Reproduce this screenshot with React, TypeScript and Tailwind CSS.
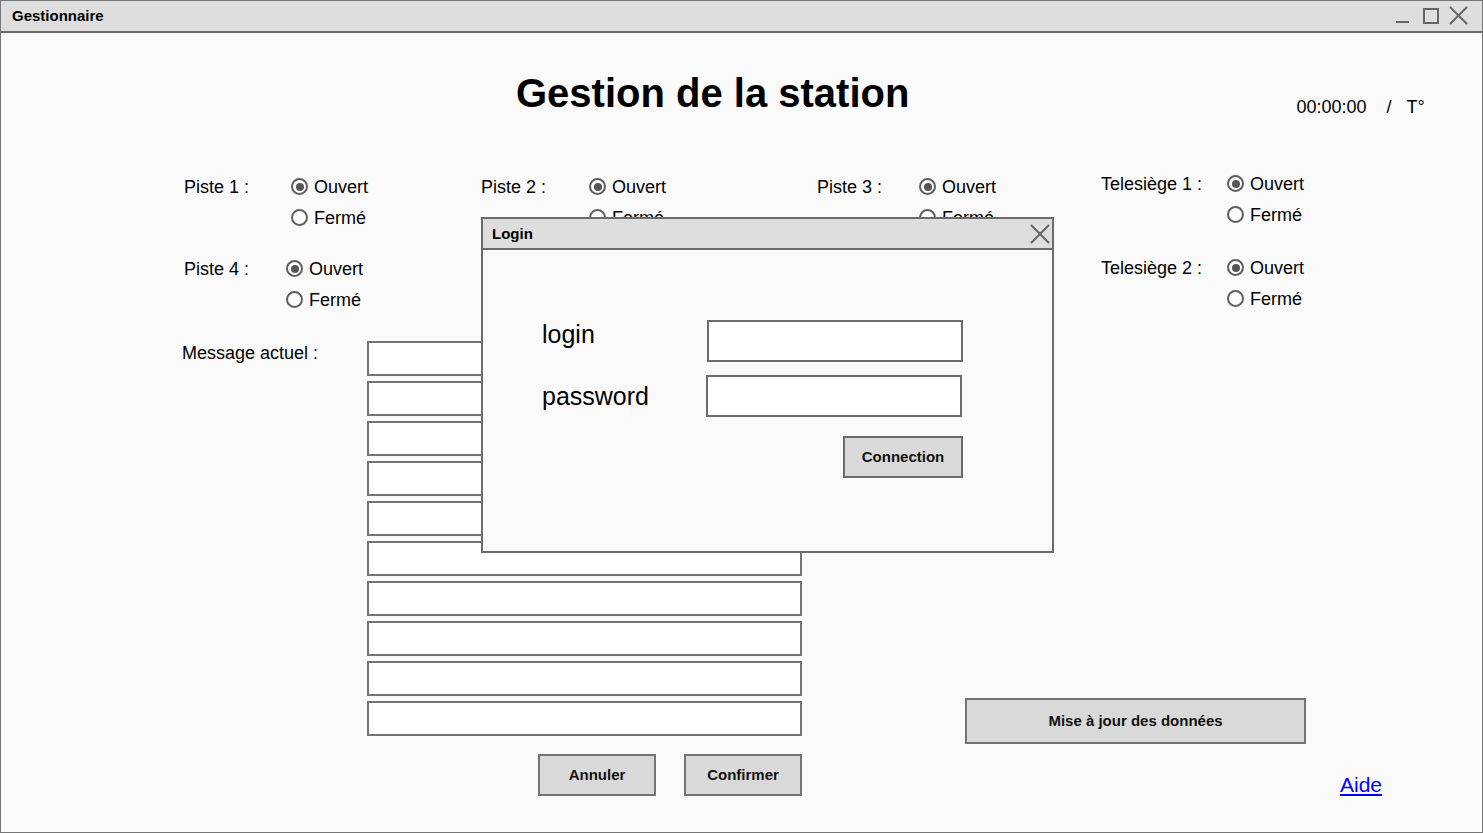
import React from "react";

function Radio({ label, checked = false }: { label: string; checked?: boolean }) {
  return (
    <div className="flex h-[31px] items-center gap-[6px] text-[18px] leading-[24px]">
      <span className="flex h-[17px] w-[17px] items-center justify-center rounded-full border-2 border-[#5e5e5e] bg-white">
        {checked && <span className="h-[8px] w-[8px] rounded-full bg-[#555]" />}
      </span>
      <span className="pt-px">{label}</span>
    </div>
  );
}

function Group({ label, w, className = "" }: { label: string; w: string; className?: string }) {
  return (
    <div className={`flex ${className}`}>
      <div className={`flex h-[31px] items-center pt-[2px] text-[18px] ${w}`}>{label}</div>
      <div className="flex flex-col">
        <Radio label="Ouvert" checked />
        <Radio label="Fermé" />
      </div>
    </div>
  );
}

function CloseIcon() {
  return (
    <svg width="20" height="20" viewBox="0 0 20 20" fill="none" stroke="#666" strokeWidth="2">
      <path d="M1 1 L19 19 M19 1 L1 19" />
    </svg>
  );
}

export default function App() {
  return (
    <div className="relative h-[833px] w-[1483px] overflow-hidden border border-[#777] bg-[#fafafa] font-['Liberation_Sans',Arial,sans-serif] text-black">
      {/* barre de titre */}
      <div className="flex h-[32px] items-center border-b-2 border-[#6b6b6b] bg-[#dedede] pl-[11px] pr-[13px]">
        <span className="text-[15px] font-bold">Gestionnaire</span>
        <svg className="ml-auto" width="75" height="20" viewBox="0 0 75 20" fill="none" stroke="#666" strokeWidth="2">
          <path d="M2 16 H15" />
          <rect x="30" y="3" width="14" height="14" />
          <path d="M56 1 L73 18 M73 1 L56 18" />
        </svg>
      </div>

      {/* en-tête */}
      <div className="flex h-[80px] items-start pt-[40px]">
        <h1 className="ml-[515px] whitespace-nowrap text-[40px] font-bold leading-[40px]">Gestion de la station</h1>
        <div className="ml-[387px] mt-[22px] flex whitespace-nowrap text-[18px] leading-[24px]">
          <span>00:00:00</span>
          <span className="ml-[20px]">/</span>
          <span className="ml-[15px]">T°</span>
        </div>
      </div>

      {/* pistes */}
      <div className="mt-[58px] grid grid-cols-[297px_336px_284px_1fr] gap-y-[20px] pl-[183px]">
        <Group label="Piste 1 :" w="w-[107px]" />
        <Group label="Piste 2 :" w="w-[108px]" />
        <Group label="Piste 3 :" w="w-[102px]" />
        <Group label="Telesiège 1 :" w="w-[126px]" className="-mt-[3px]" />
        <Group label="Piste 4 :" w="w-[102px]" />
        <div />
        <div />
        <Group label="Telesiège 2 :" w="w-[126px]" className="-mt-[1px]" />
      </div>

      {/* messages */}
      <div className="mt-[26px] flex pl-[181px]">
        <div className="w-[185px] text-[18px] leading-[24px]">Message actuel :</div>
        <div className="flex w-[435px] flex-col">
          <div className="flex flex-col gap-[5px]">
            {Array.from({ length: 10 }).map((_, i) => (
              <div key={i} className="h-[35px] border-2 border-[#747474] bg-white" />
            ))}
          </div>
          <div className="mt-[18px] flex justify-end gap-[28px]">
            <button className="h-[42px] w-[118px] border-2 border-[#747474] bg-[#d9d9d9] text-[15px] font-bold text-[#111]">Annuler</button>
            <button className="h-[42px] w-[118px] border-2 border-[#747474] bg-[#d9d9d9] text-[15px] font-bold text-[#111]">Confirmer</button>
          </div>
        </div>
        <div className="ml-[163px] flex flex-col">
          <button className="mt-[357px] h-[46px] w-[341px] border-2 border-[#747474] bg-[#d9d9d9] text-[15px] font-bold text-[#111]">
            Mise à jour des données
          </button>
          <a href="#" className="ml-[375px] mt-[29px] text-[21px] leading-[24px] text-[#0000ff] underline">
            Aide
          </a>
        </div>
      </div>

      {/* fenêtre de connexion */}
      <div className="absolute left-[480px] top-[216px] flex h-[336px] w-[573px] flex-col border-2 border-[#6b6b6b] bg-[#fafafa]">
        <div className="flex h-[31px] items-center border-b-2 border-[#6b6b6b] bg-[#dedede] pl-[9px] pr-[2px]">
          <span className="pt-[2px] text-[15px] font-bold">Login</span>
          <span className="ml-auto">
            <CloseIcon />
          </span>
        </div>
        <div className="flex flex-col pl-[59px] pt-[69px]">
          <div className="flex items-center">
            <span className="mb-[14px] w-[164px] text-[25px] leading-[30px]">login</span>
            <div className="ml-px h-[42px] w-[256px] border-2 border-[#6b6b6b] bg-white" />
          </div>
          <div className="mt-[12px] flex items-center">
            <span className="w-[164px] text-[25px] leading-[30px]">password</span>
            <div className="h-[42px] w-[256px] border-2 border-[#6b6b6b] bg-white" />
          </div>
          <button className="ml-[301px] mt-[19px] h-[42px] w-[120px] border-2 border-[#6b6b6b] bg-[#d9d9d9] text-[15px] font-bold text-[#111]">
            Connection
          </button>
        </div>
      </div>
    </div>
  );
}
